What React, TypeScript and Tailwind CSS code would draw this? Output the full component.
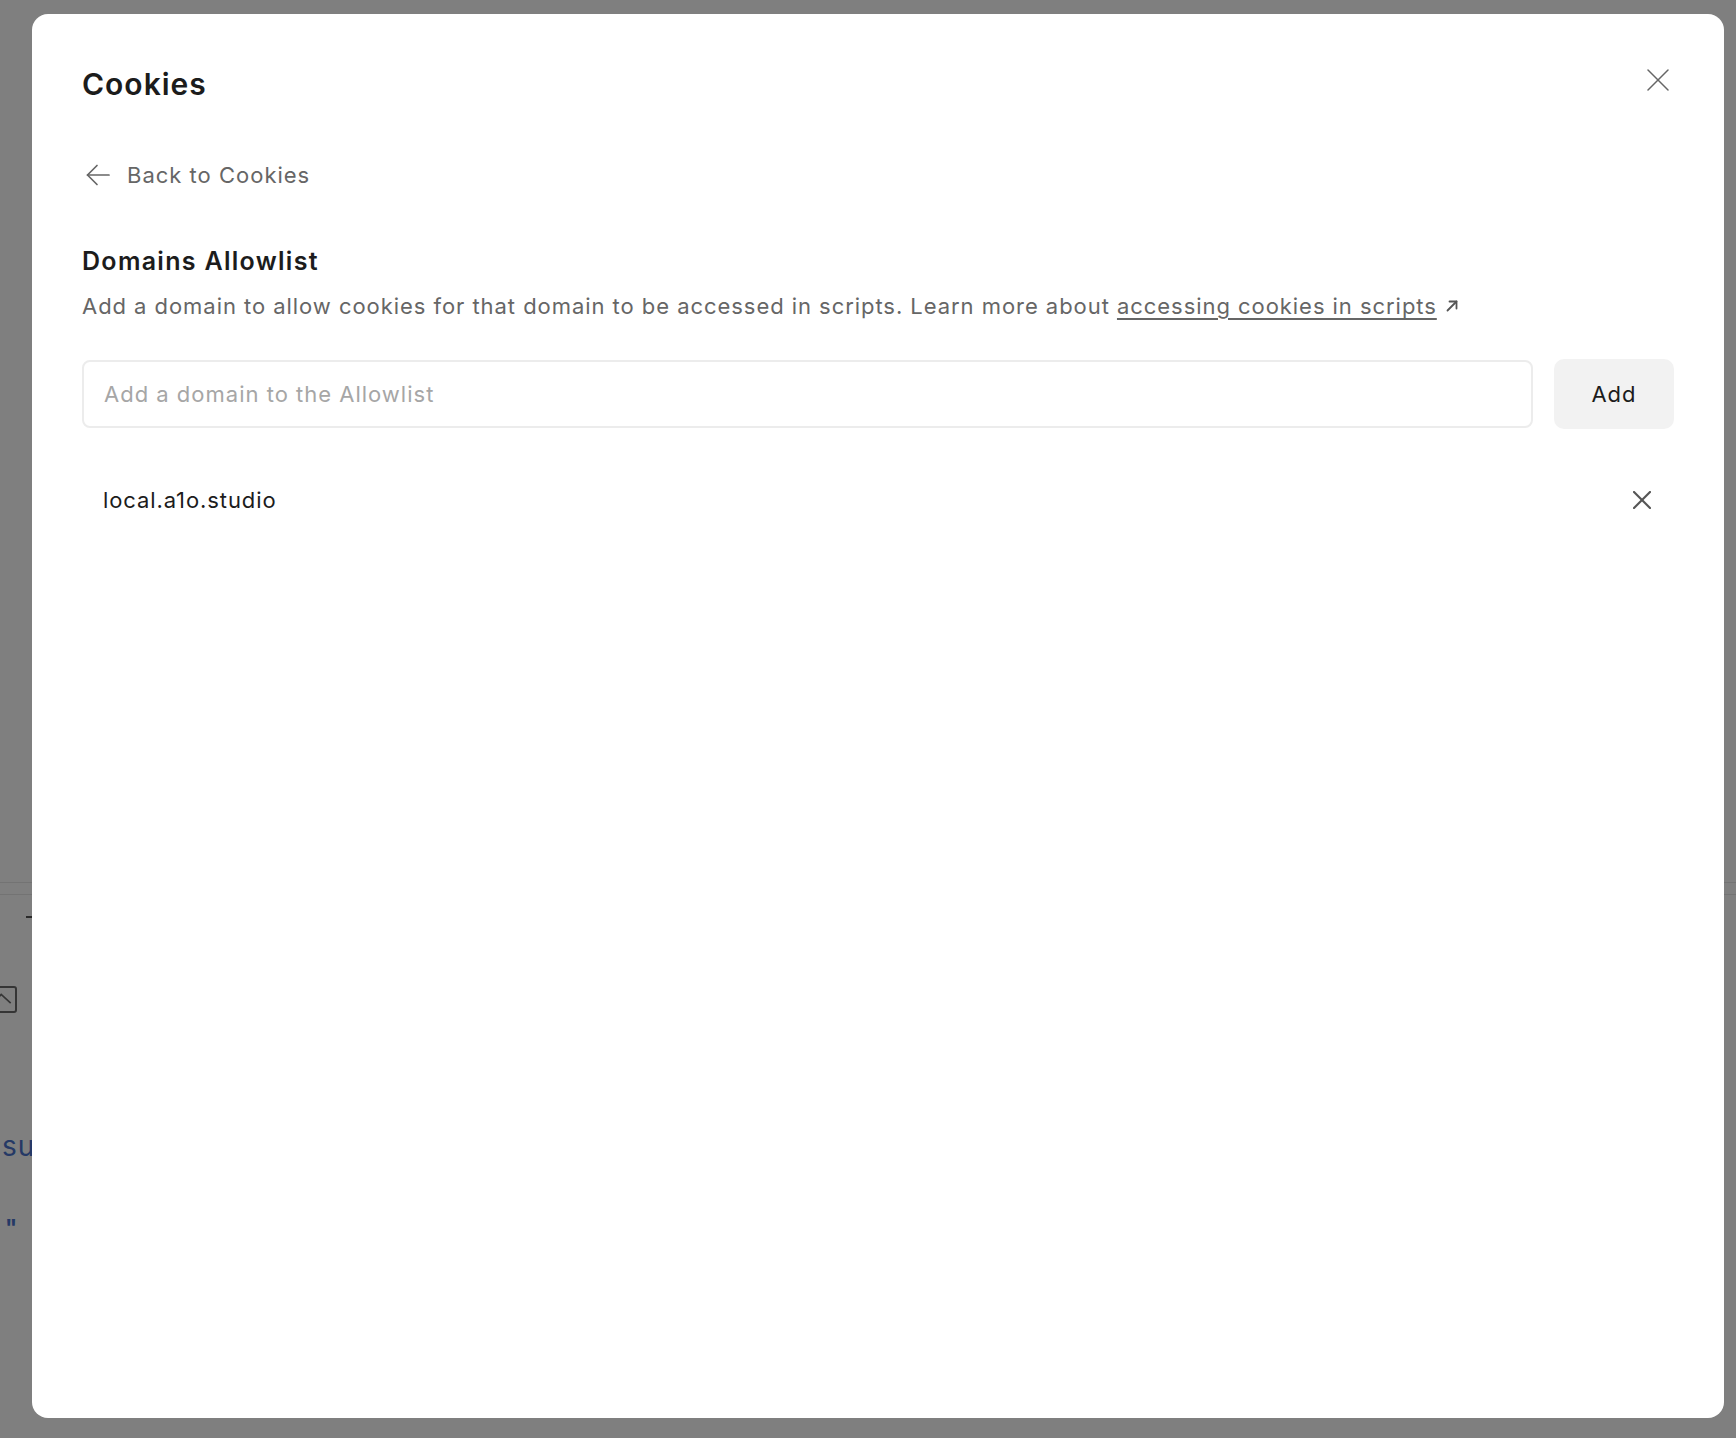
import React from "react";

function CloseIcon({ size, stroke, color }: { size: number; stroke: number; color: string }) {
  return (
    <svg width={size} height={size} viewBox={`0 0 ${size} ${size}`} fill="none" stroke={color} strokeWidth={stroke} strokeLinecap="round">
      <line x1={1} y1={1} x2={size - 1} y2={size - 1} />
      <line x1={size - 1} y1={1} x2={1} y2={size - 1} />
    </svg>
  );
}

function BackArrow() {
  return (
    <svg width="24" height="22" viewBox="0 0 24 22" fill="none" stroke="#666666" strokeWidth="1.7" strokeLinecap="round" strokeLinejoin="round">
      <line x1="1.5" y1="11" x2="23" y2="11" />
      <polyline points="11,1.5 1.5,11 11,20.5" />
    </svg>
  );
}

function ExternalArrow() {
  return (
    <svg width="12" height="12" viewBox="0 0 12 12" fill="none" stroke="#555555" strokeWidth="1.8" strokeLinecap="round" strokeLinejoin="round">
      <line x1="1.5" y1="10.5" x2="10.5" y2="1.5" />
      <polyline points="3.5,1.5 10.5,1.5 10.5,8.5" />
    </svg>
  );
}

export default function App() {
  return (
    <div className="relative h-[1438px] w-full overflow-hidden bg-white font-['Inter','Noto_Sans',sans-serif]">
      {/* background page (behind overlay) */}
      <div className="flex flex-col">
        <div className="h-[882px]" />
        <div className="h-[13px] border-t border-b border-[#e6e6e6]" />
        <div className="ml-[26px] mt-[21px] h-[2px] w-[8px] bg-[#555555]" />
        <div className="-ml-[12px] mt-[68px] flex h-[27px] w-[29px] items-end overflow-hidden rounded-[3px] border-2 border-[#6a6a6a]">
          <svg width="29" height="27" viewBox="0 0 29 27" fill="none" stroke="#6a6a6a" strokeWidth="2">
            <polyline points="2,22 13,10 24,20" />
          </svg>
        </div>
        <div className="ml-[2px] mt-[116px] text-[28px] leading-[34px] tracking-[1px] text-[#4a72cc]">su</div>
        <div className="ml-[5px] mt-[52px] text-[22px] leading-[24px] font-bold text-[#4a72cc]">"</div>
      </div>

      {/* overlay */}
      <div className="absolute inset-0 bg-black/50" />

      {/* modal */}
      <div className="absolute left-[32px] top-[14px] flex h-[1404px] w-[1692px] flex-col rounded-[16px] bg-white px-[50px] pt-[52px]">
        <button className="absolute right-[55px] top-[55px]" aria-label="Close">
          <CloseIcon size={22} stroke={1.5} color="#666666" />
        </button>

        <h2 className="text-[30px] leading-[36px] font-semibold tracking-[1px] text-[#1c1c1c]">Cookies</h2>

        <button className="mt-[57px] flex items-center gap-[17px] self-start">
          <span className="ml-[4px] flex"><BackArrow /></span>
          <span className="text-[22px] leading-[32px] tracking-[1px] text-[#666666]">Back to Cookies</span>
        </button>

        <h3 className="mt-[54px] text-[25px] leading-[32px] font-semibold tracking-[1.3px] text-[#1c1c1c]">Domains Allowlist</h3>
        <p className="mt-[13px] flex items-center text-[22px] leading-[32px] tracking-[0.95px] text-[#666666]">
          <span>
            Add a domain to allow cookies for that domain to be accessed in scripts. Learn more about{" "}
            <a className="underline decoration-[1.5px] underline-offset-[4px]">accessing cookies in scripts</a>
          </span>
          <span className="ml-[9px] flex"><ExternalArrow /></span>
        </p>

        <div className="mt-[37px] flex items-center gap-[21px]">
          <input
            className="h-[68px] flex-1 rounded-[8px] border-2 border-[#ececec] px-[20px] text-[22px] tracking-[1px] text-[#1c1c1c] outline-none placeholder:text-[#a6a6a6]"
            placeholder="Add a domain to the Allowlist"
          />
          <button className="h-[70px] w-[120px] rounded-[10px] bg-[#f2f2f2] text-[22px] tracking-[1px] text-[#1c1c1c]">Add</button>
        </div>

        <div className="mt-[55px] flex items-center justify-between pl-[21px] pr-[23px]">
          <span className="text-[22px] leading-[32px] tracking-[0.9px] text-[#1c1c1c]">local.a1o.studio</span>
          <button aria-label="Remove">
            <CloseIcon size={18} stroke={2.2} color="#555555" />
          </button>
        </div>
      </div>
    </div>
  );
}
